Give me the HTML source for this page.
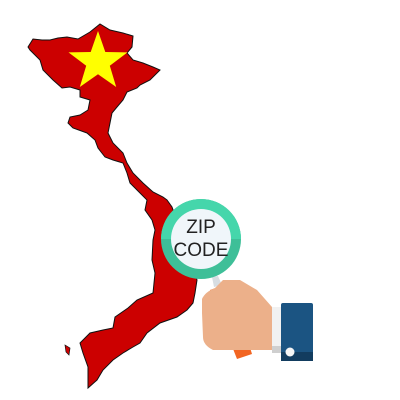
<!DOCTYPE html>
<html><head><style>html,body{margin:0;padding:0;background:#fff;width:400px;height:400px;overflow:hidden}</style></head>
<body>
<svg width="400" height="400" viewBox="0 0 400 400" xmlns="http://www.w3.org/2000/svg">
<path d="M28,47 L33,39 L42,40 L50,40 L58,38 L67,37 L78,39 L90,32 L100,24 L110,30 L123,33 L133,36 L132,47 L127,53 L133,60 L143,63 L153,67 L160,70 L157,73 L150,80 L140,85 L137,88 L127,92 L123,100 L117,107 L112,113 L110,123 L108,133 L113,143 L123,153 L127,163 L133,173 L143,183 L153,192 L163,197 L167,200 L172,207 L180,230 L190,255 L197,280 L195,293 L193,303 L187,310 L177,317 L160,323 L147,333 L140,343 L133,347 L123,353 L113,360 L103,370 L97,380 L88,388 L88,367 L83,353 L80,343 L90,333 L103,330 L113,328 L115,317 L128,308 L137,300 L153,293 L155,273 L152,260 L153,240 L155,230 L152,220 L145,210 L147,200 L140,193 L130,183 L127,173 L123,163 L113,160 L105,157 L98,148 L95,140 L87,133 L73,128 L68,123 L70,117 L80,115 L88,110 L90,100 L80,97 L80,90 L70,87 L62,88 L53,80 L43,70 L40,60 L30,50 Z" fill="#cc0000" stroke="#111" stroke-width="1"/>
<path d="M65,345 L70,348 L69,355 L66,352 Z" fill="#cc0000" stroke="#111" stroke-width="0.7"/>
<polygon points="98,31 105.3,52 127.5,52.4 109.8,65.8 116.2,87 98,74.3 79.8,87 86.2,65.8 68.5,52.4 90.7,52" fill="#ffff00"/>
<polygon points="210,290 230,283 252,354 237,359" fill="#f26522"/>
<polygon points="212,277 218,276 222,285 214,287" fill="#d7dde2"/>
<path d="M202,299 Q205,292 215,288 L223,280 L240,280 L257,290 L272,307 L273,350 L250,350 L213,350 Q203,345 203,337 L202,313 Z" fill="#ecb08a"/>
<rect x="272" y="307" width="9" height="46" fill="#f1f1f1"/>
<rect x="272" y="346" width="9" height="7" fill="#cfcfcf"/>
<rect x="281" y="303" width="32" height="58" rx="2" fill="#1b5482"/>
<rect x="281" y="352" width="32" height="9" fill="#123c5f"/>
<circle cx="290" cy="352" r="4.5" fill="#f5f5f5"/>
<circle cx="201" cy="239" r="40" fill="#3ebf98"/>
<path d="M161,239 A40,40 0 0 1 241,239 Z" fill="#45d6ab"/>
<circle cx="201" cy="239" r="30" fill="#f0f6fa"/>
<text x="201" y="233" font-family="Liberation Sans, sans-serif" font-size="19" text-anchor="middle" fill="#222">ZIP</text>
<text x="201" y="256" font-family="Liberation Sans, sans-serif" font-size="19" text-anchor="middle" fill="#222">CODE</text>
</svg>
</body></html>
